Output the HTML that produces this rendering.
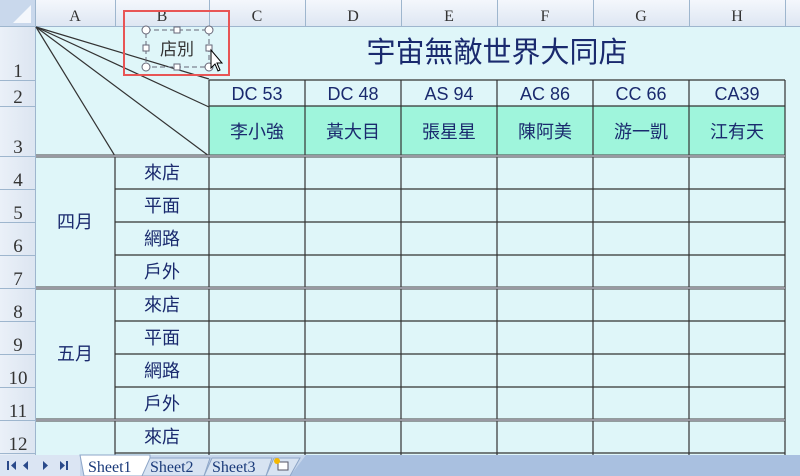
<!DOCTYPE html><html><head><meta charset="utf-8"><style>body{margin:0;width:800px;height:476px;overflow:hidden;background:#fff}svg{display:block}text{font-family:"Liberation Sans","Noto Sans CJK TC",sans-serif}text.s{font-family:"Liberation Serif",serif}</style></head><body>
<svg width="800" height="476" viewBox="0 0 800 476">
<defs><linearGradient id="hg" x1="0" y1="0" x2="0" y2="1"><stop offset="0" stop-color="#f4f7fc"/><stop offset="1" stop-color="#dde6f2"/></linearGradient>
<linearGradient id="vg" x1="0" y1="0" x2="1" y2="0"><stop offset="0" stop-color="#eaf0f8"/><stop offset="1" stop-color="#dce5f1"/></linearGradient></defs>
<rect x="36" y="27" width="764" height="428" fill="#dff6f9"/>
<rect x="209" y="106" width="576" height="50" fill="#9ff5dc"/>
<rect x="0" y="0" width="800" height="27" fill="url(#hg)"/>
<rect x="0" y="27" width="36" height="428" fill="url(#vg)"/>
<rect x="0" y="0" width="36" height="27" fill="#c9d8ec"/>
<polygon points="31,5 31,23 13,23" fill="#f4f7fc"/>
<g stroke="#9eb6ce" stroke-width="1">
<line x1="0" y1="26.5" x2="800" y2="26.5"/><line x1="35.5" y1="0" x2="35.5" y2="455"/>
<line x1="115.5" y1="0" x2="115.5" y2="27"/><line x1="209.5" y1="0" x2="209.5" y2="27"/><line x1="305.5" y1="0" x2="305.5" y2="27"/><line x1="401.5" y1="0" x2="401.5" y2="27"/><line x1="497.5" y1="0" x2="497.5" y2="27"/><line x1="593.5" y1="0" x2="593.5" y2="27"/><line x1="689.5" y1="0" x2="689.5" y2="27"/><line x1="785.5" y1="0" x2="785.5" y2="27"/>
<line x1="0" y1="80.5" x2="36" y2="80.5"/><line x1="0" y1="106.5" x2="36" y2="106.5"/><line x1="0" y1="156.5" x2="36" y2="156.5"/><line x1="0" y1="189.5" x2="36" y2="189.5"/><line x1="0" y1="222.5" x2="36" y2="222.5"/><line x1="0" y1="255.5" x2="36" y2="255.5"/><line x1="0" y1="288.5" x2="36" y2="288.5"/><line x1="0" y1="321.5" x2="36" y2="321.5"/><line x1="0" y1="354.5" x2="36" y2="354.5"/><line x1="0" y1="387.5" x2="36" y2="387.5"/><line x1="0" y1="420.5" x2="36" y2="420.5"/><line x1="0" y1="453.5" x2="36" y2="453.5"/>
</g>
<g font-size="16" fill="#333" text-anchor="middle">
<text class="s" x="75" y="21">A</text><text class="s" x="162" y="21">B</text><text class="s" x="257" y="21">C</text><text class="s" x="353" y="21">D</text><text class="s" x="449" y="21">E</text><text class="s" x="545" y="21">F</text><text class="s" x="641" y="21">G</text><text class="s" x="737" y="21">H</text>
</g>
<g font-size="19" fill="#333" text-anchor="middle">
<text class="s" x="18" y="77">1</text><text class="s" x="18" y="103">2</text><text class="s" x="18" y="153">3</text><text class="s" x="18" y="186">4</text><text class="s" x="18" y="219">5</text><text class="s" x="18" y="252">6</text><text class="s" x="18" y="285">7</text><text class="s" x="18" y="318">8</text><text class="s" x="18" y="351">9</text><text class="s" x="18" y="384">10</text><text class="s" x="18" y="417">11</text><text class="s" x="18" y="450">12</text>
</g>
<g stroke="#333" stroke-width="1.2">
<line x1="209" y1="80" x2="785" y2="80"/><line x1="209" y1="106" x2="785" y2="106"/>
<line x1="115" y1="189" x2="785" y2="189"/><line x1="115" y1="222" x2="785" y2="222"/><line x1="115" y1="255" x2="785" y2="255"/>
<line x1="115" y1="321" x2="785" y2="321"/><line x1="115" y1="354" x2="785" y2="354"/><line x1="115" y1="387" x2="785" y2="387"/><line x1="115" y1="453" x2="785" y2="453"/>
<line x1="209" y1="80" x2="209" y2="455"/><line x1="305" y1="80" x2="305" y2="455"/><line x1="401" y1="80" x2="401" y2="455"/><line x1="497" y1="80" x2="497" y2="455"/><line x1="593" y1="80" x2="593" y2="455"/><line x1="689" y1="80" x2="689" y2="455"/><line x1="785" y1="80" x2="785" y2="455"/>
<line x1="115" y1="156" x2="115" y2="455"/>
<line x1="36" y1="27" x2="209" y2="79"/><line x1="36" y1="27" x2="209" y2="107"/><line x1="36" y1="27" x2="209" y2="156"/><line x1="36" y1="27" x2="115" y2="156"/>
</g>
<g stroke="#444" stroke-width="3">
<line x1="36" y1="156" x2="785" y2="156"/><line x1="36" y1="288" x2="785" y2="288"/><line x1="36" y1="420" x2="785" y2="420"/>
</g>
<g stroke="#eef" stroke-width="1"><line x1="36" y1="156" x2="785" y2="156"/><line x1="36" y1="288" x2="785" y2="288"/><line x1="36" y1="420" x2="785" y2="420"/></g>
<g fill="#1a2a6e" text-anchor="middle">
<text x="497" y="62" font-size="29">宇宙無敵世界大同店</text>
<g font-size="18"><text x="257" y="100">DC 53</text><text x="353" y="100">DC 48</text><text x="449" y="100">AS 94</text><text x="545" y="100">AC 86</text><text x="641" y="100">CC 66</text><text x="737" y="100">CA39</text>
<text x="257" y="138">李小強</text><text x="353" y="138">黃大目</text><text x="449" y="138">張星星</text><text x="545" y="138">陳阿美</text><text x="641" y="138">游一凱</text><text x="737" y="138">江有天</text>
<text x="162" y="179">來店</text><text x="162" y="212">平面</text><text x="162" y="245">網路</text><text x="162" y="278">戶外</text>
<text x="162" y="311">來店</text><text x="162" y="344">平面</text><text x="162" y="377">網路</text><text x="162" y="410">戶外</text>
<text x="162" y="443">來店</text>
<text x="75" y="228">四月</text><text x="75" y="360">五月</text></g>
</g>
<g fill="none" stroke="#667" stroke-dasharray="5,3"><rect x="146" y="30" width="63" height="37"/></g>
<text x="177" y="55" font-size="17" fill="#333" text-anchor="middle">店別</text>
<g fill="#fff" stroke="#667"><circle cx="146" cy="30" r="4"/><circle cx="209" cy="30" r="4"/><circle cx="146" cy="67" r="4"/><circle cx="209" cy="67" r="4"/><rect x="174" y="27" width="6" height="6"/><rect x="174" y="64" width="6" height="6"/><rect x="143" y="45" width="6" height="6"/><rect x="206" y="45" width="6" height="6"/></g>
<path d="M211 50 L211 68 L215 64 L218 71 L220 70 L217 63 L222 63 Z" fill="#fff" stroke="#000"/>
<rect x="124" y="11" width="105" height="64" fill="none" stroke="#e85555" stroke-width="2"/>
<rect x="0" y="455" width="800" height="21" fill="#c6d6ec"/>
<rect x="0" y="455" width="80" height="21" fill="#dbe5f3"/>
<polygon points="290,476 306,455 800,455 800,476" fill="#a9c0e0"/>
<g fill="#2a4a8a"><rect x="7" y="461" width="2" height="9"/><polygon points="16,461 11,465.5 16,470"/><polygon points="28,461 23,465.5 28,470"/><polygon points="43,461 48,465.5 43,470"/><polygon points="60,461 65,465.5 60,470"/><rect x="66" y="461" width="2" height="9"/></g>
<path d="M80 455 L84 476 L142 476 L150 461 L150 455 Z" fill="#fff" stroke="#8ea6c8"/>
<path d="M142 476 L150 458 L210 458 L204 476 Z" fill="#d7e3f2" stroke="#8ea6c8"/>
<path d="M204 476 L212 458 L272 458 L266 476 Z" fill="#d7e3f2" stroke="#8ea6c8"/>
<path d="M266 476 L274 458 L300 458 L290 476 Z" fill="#d7e3f2" stroke="#8ea6c8"/>
<g font-size="16" fill="#1a3a7a"><text class="s" x="88" y="472">Sheet1</text><text class="s" x="150" y="472">Sheet2</text><text class="s" x="212" y="472">Sheet3</text></g>
<rect x="278" y="462" width="10" height="8" fill="#fff" stroke="#556"/><circle cx="277" cy="461" r="3" fill="#f5b800"/>
</svg></body></html>
